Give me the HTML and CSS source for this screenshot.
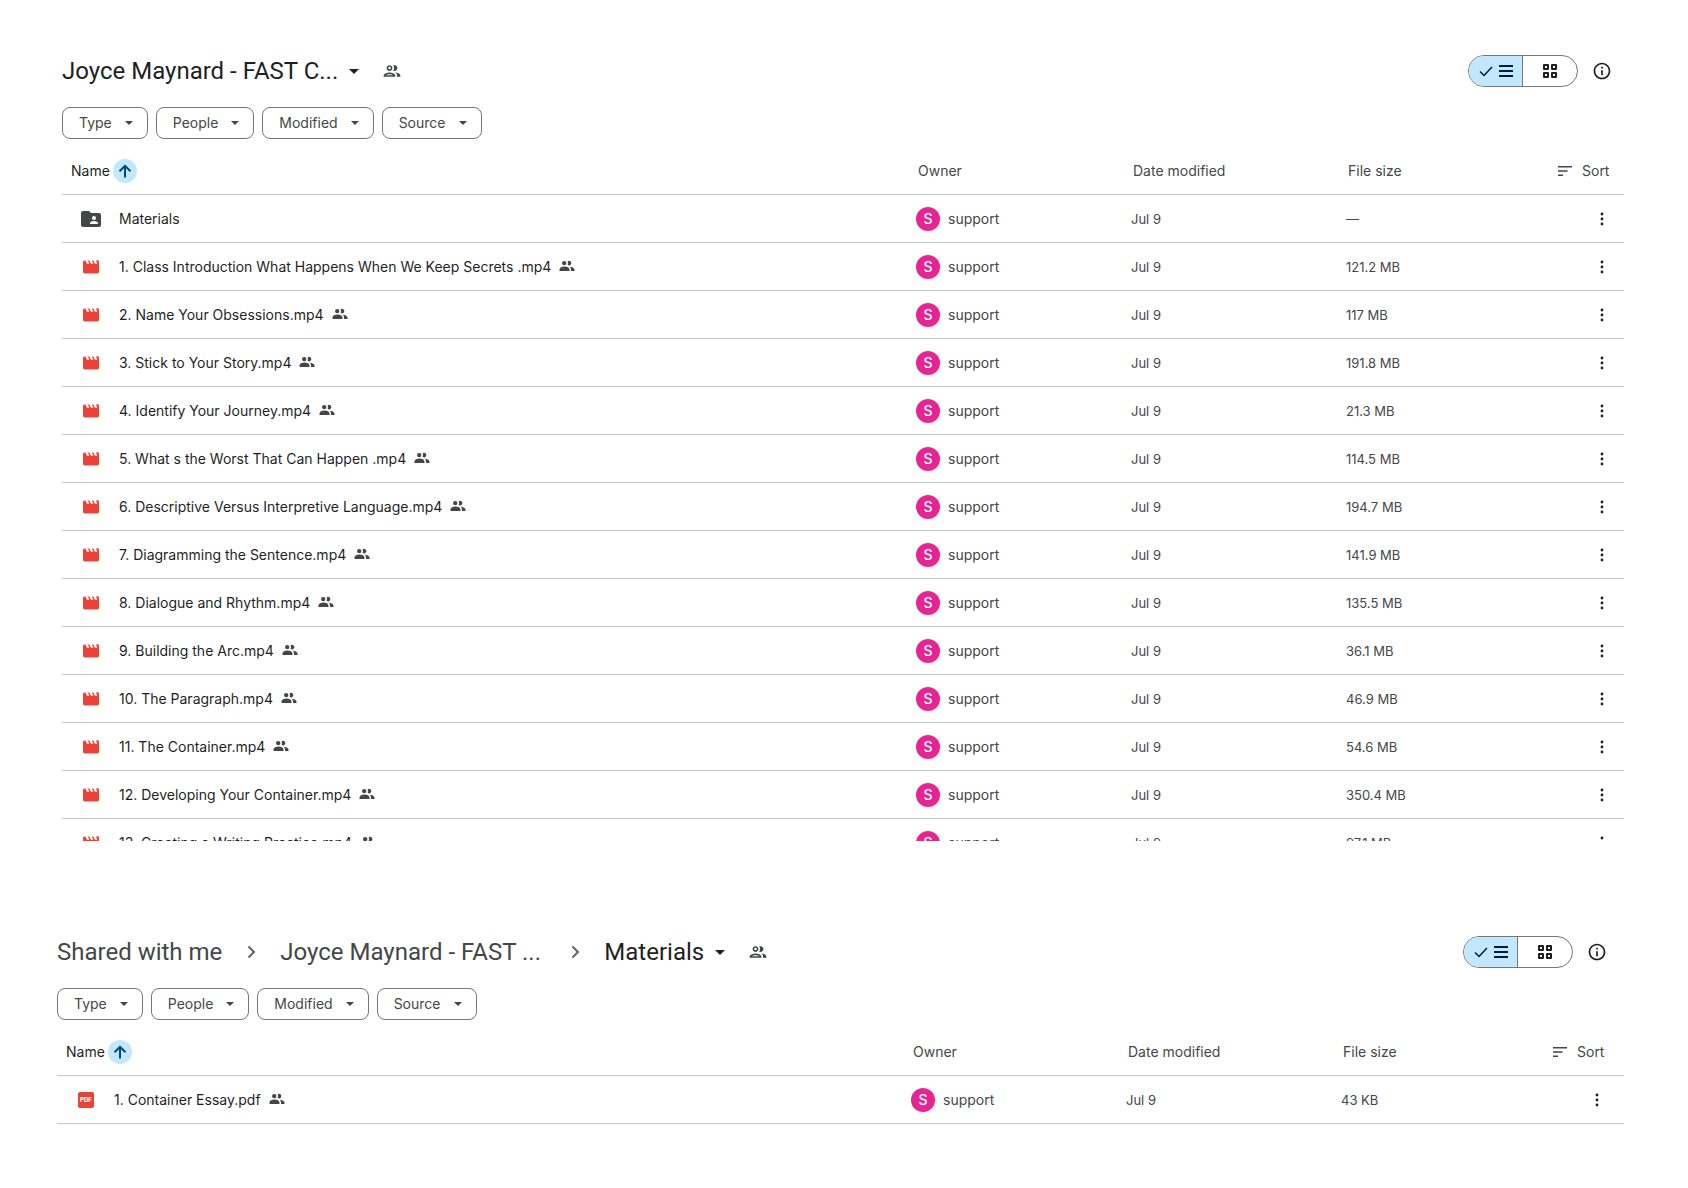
FILE: index.html
```
<!DOCTYPE html>
<html lang="en">
<head>
    <meta charset="UTF-8">
    <meta name="viewport" content="width=device-width, initial-scale=1.0">
    <title>Joyce Maynard - Shared with me</title>
    <link rel="stylesheet" href="styles.css">
</head>
<body>
    <!-- Icon set -->
    <svg class="sprite" aria-hidden="true">
        <symbol id="caret" viewBox="0 0 10 5"><path d="M0 0h10L5 5z"/></symbol>
        <symbol id="group" viewBox="0 0 24 24"><path d="M9 13.75c-2.34 0-7 1.17-7 3.5V19h14v-1.75c0-2.33-4.66-3.5-7-3.5zM4.34 17c.84-.58 2.87-1.25 4.66-1.25s3.82.67 4.66 1.25H4.34zM9 12c1.93 0 3.5-1.57 3.5-3.5S10.93 5 9 5 5.5 6.57 5.5 8.5 7.07 12 9 12zm0-5c.83 0 1.5.67 1.5 1.5S9.83 10 9 10s-1.5-.67-1.5-1.5S8.17 7 9 7zm7.04 6.81c1.16.84 1.96 1.96 1.96 3.44V19h4v-1.75c0-2.02-3.5-3.17-5.96-3.44zM15 12c1.93 0 3.5-1.57 3.5-3.5S16.93 5 15 5c-.54 0-1.04.13-1.5.35.63.89 1 1.98 1 3.15s-.37 2.26-1 3.15c.46.22.96.35 1.5.35z"/></symbol>
        <symbol id="shared" viewBox="0 1 16 16"><circle cx="5.2" cy="5.1" r="2.2"/><path d="M8.600 3.500a2.200 2.200 0 1 1 0 3.200 3.400 3.400 0 0 0 0-3.200zM.5 13v-1.400C.5 9.700 3 8.600 5.500 8.600s5 1.100 5 3V13zM12 13v-1.400c0-1.200-.5-2.200-1.300-2.900 2.500.2 4.800 1.300 4.800 2.900V13z"/></symbol>
        <symbol id="check" viewBox="0 0 14 12"><path d="M1 6.500l4 4L13 2" fill="none" stroke="currentColor" stroke-width="1.500"/></symbol>
        <symbol id="list" viewBox="0 0 14 12"><path d="M0 0h14v2H0zM0 5h14v2H0zM0 10h14v2H0z"/></symbol>
        <symbol id="grid" viewBox="0 0 14 14"><path d="M1 1h4v4H1zM9 1h4v4H9zM1 9h4v4H1zM9 9h4v4H9z" fill="none" stroke="currentColor" stroke-width="2" stroke-linejoin="round"/></symbol>
        <symbol id="info" viewBox="0 0 24 24"><path d="M11 7h2v2h-2zm0 4h2v6h-2zm1-9C6.480 2 2 6.480 2 12s4.480 10 10 10 10-4.480 10-10S17.520 2 12 2zm0 18c-4.410 0-8-3.590-8-8s3.590-8 8-8 8 3.590 8 8-3.590 8-8 8z"/></symbol>
        <symbol id="arrow" viewBox="0 0 24 24"><path d="M12 18.500V7M6.500 12.300L12 6.800l5.500 5.500" fill="none" stroke="currentColor" stroke-width="2"/></symbol>
        <symbol id="sort" viewBox="0 0 14 10"><path d="M0 0h14v1.500H0zM0 4.200h9.500v1.500H0zM0 8.500h5V10H0z"/></symbol>
        <symbol id="chevron" viewBox="0 0 24 24"><path d="M9.500 6.500L15 12l-5.500 5.500" fill="none" stroke="currentColor" stroke-width="2"/></symbol>
        <symbol id="dots" viewBox="0 0 20 20"><circle cx="10" cy="5" r="1.400"/><circle cx="10" cy="10" r="1.400"/><circle cx="10" cy="15" r="1.400"/></symbol>
        <symbol id="folder" viewBox="0 0 24 24"><path d="M20 6h-8l-2-2H4c-1.100 0-1.990.9-1.990 2L2 18c0 1.100.9 2 2 2h16c1.100 0 2-.9 2-2V8c0-1.100-.9-2-2-2zm-5 3c1.100 0 2 .9 2 2s-.9 2-2 2-2-.9-2-2 .9-2 2-2zm4 8h-8v-1c0-1.330 2.670-2 4-2s4 .67 4 2v1z"/></symbol>
        <symbol id="movie" viewBox="-3 -3 30 30"><path d="M18 4l2 4h-3l-2-4h-2l2 4h-3l-2-4H8l2 4H7L5 4H4c-1.100 0-2 .9-2 2v12c0 1.100.9 2 2 2h16c1.100 0 2-.9 2-2V4h-4z"/></symbol>
    </svg>

    <main class="page">
        <section class="panel">
            <div class="toolbar">
                <h1 class="crumbs">
                    <button class="title">Joyce Maynard - FAST C...<svg class="title-caret"><use href="#caret"/></svg></button>
                    <button class="people" aria-label="Manage access"><svg class="icon"><use href="#group"/></svg></button>
                </h1>
                <div class="toggle">
                    <button class="toggle-btn active" aria-label="List layout"><svg class="bars"><use href="#check"/></svg><svg class="bars"><use href="#list"/></svg></button>
                    <button class="toggle-btn" aria-label="Grid layout"><svg class="squares"><use href="#grid"/></svg></button>
                </div>
                <button class="info" aria-label="View details"><svg class="icon"><use href="#info"/></svg></button>
            </div>
            <div class="chips">
                <button class="chip">Type<svg class="chip-caret"><use href="#caret"/></svg></button>
                <button class="chip">People<svg class="chip-caret"><use href="#caret"/></svg></button>
                <button class="chip">Modified<svg class="chip-caret"><use href="#caret"/></svg></button>
                <button class="chip">Source<svg class="chip-caret"><use href="#caret"/></svg></button>
            </div>
            <div class="scroller">
                <table class="files">
                    <thead>
                        <tr>
                            <th class="col-name"><button class="head-btn">Name<span class="sort-dir"><svg><use href="#arrow"/></svg></span></button></th>
                            <th class="col-owner">Owner</th>
                            <th class="col-date">Date modified</th>
                            <th class="col-size">File size</th>
                            <th class="col-menu"><button class="sort-btn"><svg><use href="#sort"/></svg>Sort</button></th>
                        </tr>
                    </thead>
                    <tbody id="videos">
                        <tr>
                            <td><div class="name"><svg class="folder"><use href="#folder"/></svg><span>Materials</span></div></td>
                            <td><div class="owner"><span class="avatar">S</span>support</div></td>
                            <td>Jul 9</td>
                            <td>—</td>
                            <td class="menu"><button aria-label="More actions"><svg class="icon"><use href="#dots"/></svg></button></td>
                        </tr>
                    </tbody>
                </table>
            </div>
        </section>

        <section class="panel panel-sub">
            <div class="toolbar">
                <h2 class="crumbs">
                    <a class="crumb" href="#">Shared with me</a>
                    <svg class="chevron"><use href="#chevron"/></svg>
                    <a class="crumb crumb-folder" href="#">Joyce Maynard - FAST ...</a>
                    <svg class="chevron"><use href="#chevron"/></svg>
                    <button class="title">Materials<svg class="title-caret"><use href="#caret"/></svg></button>
                    <button class="people" aria-label="Manage access"><svg class="icon"><use href="#group"/></svg></button>
                </h2>
                <div class="toggle">
                    <button class="toggle-btn active" aria-label="List layout"><svg class="bars"><use href="#check"/></svg><svg class="bars"><use href="#list"/></svg></button>
                    <button class="toggle-btn" aria-label="Grid layout"><svg class="squares"><use href="#grid"/></svg></button>
                </div>
                <button class="info" aria-label="View details"><svg class="icon"><use href="#info"/></svg></button>
            </div>
            <div class="chips">
                <button class="chip">Type<svg class="chip-caret"><use href="#caret"/></svg></button>
                <button class="chip">People<svg class="chip-caret"><use href="#caret"/></svg></button>
                <button class="chip">Modified<svg class="chip-caret"><use href="#caret"/></svg></button>
                <button class="chip">Source<svg class="chip-caret"><use href="#caret"/></svg></button>
            </div>
            <table class="files">
                <thead>
                    <tr>
                        <th class="col-name"><button class="head-btn">Name<span class="sort-dir"><svg><use href="#arrow"/></svg></span></button></th>
                        <th class="col-owner">Owner</th>
                        <th class="col-date">Date modified</th>
                        <th class="col-size">File size</th>
                        <th class="col-menu"><button class="sort-btn"><svg><use href="#sort"/></svg>Sort</button></th>
                    </tr>
                </thead>
                <tbody>
                    <tr>
                        <td><div class="name"><span class="pdf">PDF</span><span>1. Container Essay.pdf</span><svg class="shared"><use href="#shared"/></svg></div></td>
                        <td><div class="owner"><span class="avatar">S</span>support</div></td>
                        <td>Jul 9</td>
                        <td>43 KB</td>
                        <td class="menu"><button aria-label="More actions"><svg class="icon"><use href="#dots"/></svg></button></td>
                    </tr>
                </tbody>
            </table>
        </section>
    </main>

    <script>
        const videos = [
            ['1. Class Introduction What Happens When We Keep Secrets .mp4', '121.2 MB'],
            ['2. Name Your Obsessions.mp4', '117 MB'],
            ['3. Stick to Your Story.mp4', '191.8 MB'],
            ['4. Identify Your Journey.mp4', '21.3 MB'],
            ['5. What s the Worst That Can Happen .mp4', '114.5 MB'],
            ['6. Descriptive Versus Interpretive Language.mp4', '194.7 MB'],
            ['7. Diagramming the Sentence.mp4', '141.9 MB'],
            ['8. Dialogue and Rhythm.mp4', '135.5 MB'],
            ['9. Building the Arc.mp4', '36.1 MB'],
            ['10. The Paragraph.mp4', '46.9 MB'],
            ['11. The Container.mp4', '54.6 MB'],
            ['12. Developing Your Container.mp4', '350.4 MB'],
            ['13. Creating a Writing Practice.mp4', '97.1 MB']
        ];

        // Add one row per video below the folder
        const rows = videos.map(([name, size]) => `
            <tr>
                <td><div class="name"><svg class="movie"><use href="#movie"/></svg><span>${name}</span><svg class="shared"><use href="#shared"/></svg></div></td>
                <td><div class="owner"><span class="avatar">S</span>support</div></td>
                <td>Jul 9</td>
                <td>${size}</td>
                <td class="menu"><button aria-label="More actions"><svg class="icon"><use href="#dots"/></svg></button></td>
            </tr>`);
        document.getElementById('videos').insertAdjacentHTML('beforeend', rows.join(''));
    </script>
</body>
</html>
```
FILE: styles.css
```
* {
    box-sizing: border-box;
}

body {
    margin: 0;
    background: #fff;
    color: #444746;
    font-family: Inter, 'Liberation Sans', sans-serif;
    font-size: 14px;
    line-height: 20px;
}

button {
    padding: 0;
    border: 0;
    background: none;
    color: inherit;
    font: inherit;
    cursor: pointer;
}

svg {
    display: block;
    flex: none;
    fill: currentColor;
}

.sprite {
    position: absolute;
    width: 0;
    height: 0;
}

.icon {
    width: 20px;
    height: 20px;
}

.page {
    display: flex;
    flex-direction: column;
    gap: 95px;
    padding: 55px 64px 62px 62px;
}

/* the second panel starts a little further left */
.panel-sub {
    margin-left: -5px;
}

.panel-sub .toolbar {
    padding-right: 17px;
}

/* Toolbar */
.toolbar {
    display: flex;
    align-items: center;
    height: 32px;
    padding-right: 12px;
}

.crumbs {
    display: flex;
    align-items: center;
    gap: 17px;
    margin: 0 auto 0 0;
    font-family: Roboto, 'Liberation Sans', sans-serif;
    font-size: 24px;
    font-weight: 400;
    line-height: 32px;
}

.crumb {
    color: #444746;
    text-decoration: none;
}

.crumb-folder {
    min-width: 266px;
}

.chevron {
    width: 24px;
    height: 24px;
    color: #5f6368;
}

.title {
    display: flex;
    align-items: center;
    gap: 11px;
    color: #1f1f1f;
}

.title-caret {
    width: 10px;
    height: 5px;
}

.people {
    margin-left: 6px;
}

.toggle {
    display: flex;
    height: 32px;
    border: 1px solid #747775;
    border-radius: 16px;
    overflow: hidden;
}

.toggle-btn {
    display: flex;
    align-items: center;
    justify-content: center;
    gap: 6px;
    width: 54px;
    color: #1f1f1f;
}

.toggle-btn.active {
    border-right: 1px solid #747775;
    background: #c2e7ff;
    color: #001d35;
}

.bars {
    width: 14px;
    height: 12px;
}

.squares {
    width: 14px;
    height: 14px;
}

.info {
    margin-left: 14px;
    color: #1f1f1f;
}

/* Filter chips */
.chips {
    display: flex;
    gap: 8px;
    margin: 20px 0 8px;
}

.chip {
    display: flex;
    align-items: center;
    gap: 13px;
    height: 32px;
    padding: 0 14px 0 16px;
    border: 1px solid #747775;
    border-radius: 8px;
}

.chip-caret {
    width: 8px;
    height: 4px;
}

/* File list */
.scroller {
    max-height: 694px;
    overflow: hidden;
}

.files {
    width: 100%;
    table-layout: fixed;
    border-collapse: separate;
    border-spacing: 0;
}

.files th,
.files td {
    height: 48px;
    padding: 0;
    border-bottom: 1px solid #c7c7c7;
    text-align: left;
    white-space: nowrap;
}

.files th {
    padding-left: 2px;
    font-weight: 400;
}

.files td {
    font-size: 13px;
}

.col-owner,
.col-date {
    width: 215px;
}

.col-size {
    width: 200px;
}

.col-menu {
    width: 78px;
}

.panel-sub .col-menu {
    width: 83px;
}

.head-btn {
    display: flex;
    align-items: center;
    gap: 3px;
    padding-left: 7px;
    color: #1f1f1f;
}

.sort-dir {
    border-radius: 50%;
    background: #c2e7ff;
    color: #004a77;
}

.sort-dir svg {
    width: 24px;
    height: 24px;
}

.sort-btn {
    display: flex;
    align-items: center;
    gap: 10px;
    padding-left: 10px;
}

.sort-btn svg {
    width: 14px;
    height: 10px;
}

.name {
    display: flex;
    align-items: center;
    padding-left: 17px;
    color: #1f1f1f;
    font-size: 14px;
}

.folder,
.movie {
    width: 24px;
    height: 24px;
    margin-right: 16px;
    color: #444746;
}

.movie {
    color: #ea4335;
}

.pdf {
    width: 16px;
    margin: 0 20px 0 4px;
    border-radius: 2px;
    background: #ea4335;
    color: #fff;
    font-size: 6px;
    font-weight: 800;
    line-height: 16px;
    text-align: center;
}

.shared {
    width: 16px;
    height: 16px;
    margin-left: 8px;
    color: #444746;
}

.owner {
    display: flex;
    align-items: center;
    gap: 8px;
    font-size: 14px;
}

.avatar {
    width: 24px;
    border-radius: 50%;
    background: #e52592;
    color: #fff;
    font-weight: 500;
    line-height: 24px;
    text-align: center;
}

.menu button {
    display: block;
    margin-left: 46px;
    color: #1f1f1f;
}
```
